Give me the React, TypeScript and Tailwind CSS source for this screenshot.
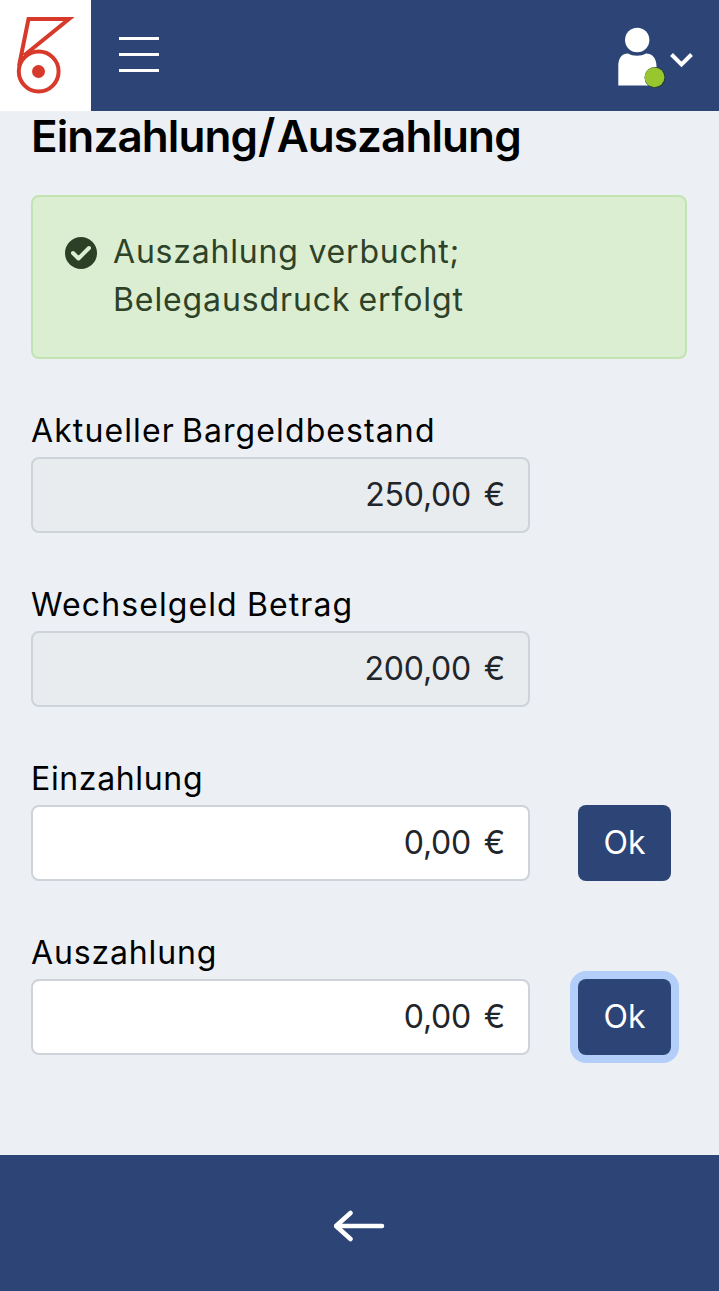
import React from "react";

function Logo() {
  return (
    <svg width="91" height="111" viewBox="0 0 91 111" fill="none" aria-label="Logo">
      <path d="M19 66 28.500 19H69L24 55.500" stroke="#d73a2b" strokeWidth="4" strokeMiterlimit="8" />
      <circle cx="38.700" cy="71.500" r="19.900" stroke="#d73a2b" strokeWidth="4" />
      <circle cx="38.500" cy="71.500" r="6.500" fill="#d73a2b" />
    </svg>
  );
}

function Header() {
  return (
    <header className="flex h-[111px] shrink-0 bg-[#2d4576]">
      <div className="w-[91px] bg-white">
        <Logo />
      </div>
      <button aria-label="Menü" className="ml-[28px] mt-[37px] flex h-[35px] w-[40px] flex-col justify-between">
        <span className="h-[3px] w-full bg-white" />
        <span className="h-[3px] w-full bg-white" />
        <span className="h-[3px] w-full bg-white" />
      </button>
      <button aria-label="Benutzer" className="ml-auto mr-[19px]">
        <svg width="100" height="111" viewBox="600 0 100 111" fill="none">
          <circle cx="637.200" cy="40" r="12.200" fill="#fff" />
          <path d="M618.300 85.500V66C618.300 58 622 53.500 628 53.500C633 56.500 641 56.500 646 53.500C652 53.500 656.500 58 656.500 66V85.500Z" fill="#fff" />
          <circle cx="655" cy="77.500" r="10.500" fill="#26412f" />
          <circle cx="654.500" cy="77.300" r="9.900" fill="#97c62f" />
          <path d="M671.500 54.500 681.500 64.500 691.500 54.500" stroke="#fff" strokeWidth="4" />
        </svg>
      </button>
    </header>
  );
}

interface FieldProps {
  label: string;
  labelClass: string;
  value: string;
  readOnly?: boolean;
  action?: boolean;
  focused?: boolean;
}

function Field({ label, labelClass, value, readOnly, action, focused }: FieldProps) {
  return (
    <div className="mb-[24px] h-[150px]">
      <div className={`h-[50px] whitespace-nowrap leading-[48px] text-black ${labelClass}`}>{label}</div>
      <div className="flex">
        <div
          className={`flex h-[76px] w-[499px] items-center justify-end rounded-[8px] border-2 border-[#ced3d9] pb-[1px] pr-[23px] text-[#212529] ${
            readOnly ? "bg-[#e8ecef]" : "bg-white"
          }`}
        >
          <span className="whitespace-nowrap leading-[48px] tracking-[-0.2px] [word-spacing:4px]">{value}</span>
        </div>
        {action && (
          <button
            className={`ml-[48px] h-[76px] w-[93px] rounded-[8px] bg-[#2d4576] pb-[1px] text-white ${
              focused ? "ring-8 ring-[#b3cff9]" : ""
            }`}
          >
            Ok
          </button>
        )}
      </div>
    </div>
  );
}

export default function App() {
  return (
    <div className="flex h-[1291px] w-[719px] flex-col bg-[#ecf0f5] font-['Inter',sans-serif] text-[32px] leading-[48px]">
      <Header />
      <main className="flex-1 pl-[31px] pr-[32px]">
        <h1 className="h-[84px] whitespace-nowrap text-[44px] font-semibold leading-[50px] tracking-[-0.9px] text-black">
          Einzahlung<span className="ml-[1px] mr-[2px] text-[46px] leading-none">/</span>Auszahlung
        </h1>
        <div className="mb-[48px] flex h-[164px] rounded-[8px] border-2 border-[#c3e3b3] bg-[#dbeed2] pl-[32px] pt-[31px] text-[#2e4228]">
          <svg className="mr-[16px] mt-[8px] shrink-0" width="32" height="34" viewBox="0 0 32 34" fill="none">
            <circle cx="16" cy="17" r="16" fill="#2b4027" />
            <path d="M8 17 13.500 22.500 24 12" stroke="#dbeed2" strokeWidth="4" strokeLinecap="round" strokeLinejoin="round" />
          </svg>
          <div className="whitespace-nowrap">
            <div className="tracking-[0.8px]">Auszahlung verbucht;</div>
            <div className="tracking-[0.9px] [word-spacing:-2px]">Belegausdruck erfolgt</div>
          </div>
        </div>
        <Field label="Aktueller Bargeldbestand" labelClass="tracking-[1.1px] [word-spacing:-3px]" value="250,00 €" readOnly />
        <Field label="Wechselgeld Betrag" labelClass="tracking-[1.1px] [word-spacing:-1px]" value="200,00 €" readOnly />
        <Field label="Einzahlung" labelClass="tracking-[0.65px]" value="0,00 €" action />
        <Field label="Auszahlung" labelClass="tracking-[0.85px]" value="0,00 €" action focused />
      </main>
      <footer className="flex h-[136px] shrink-0 justify-center bg-[#2d4576] pt-[54px]">
        <svg width="52" height="34" viewBox="334 1209 52 34" fill="none" aria-label="Zurück">
          <path d="M336 1226H382M350.500 1213 336 1226 350.500 1239" stroke="#fff" strokeWidth="4.500" strokeLinecap="round" strokeLinejoin="round" />
        </svg>
      </footer>
    </div>
  );
}
